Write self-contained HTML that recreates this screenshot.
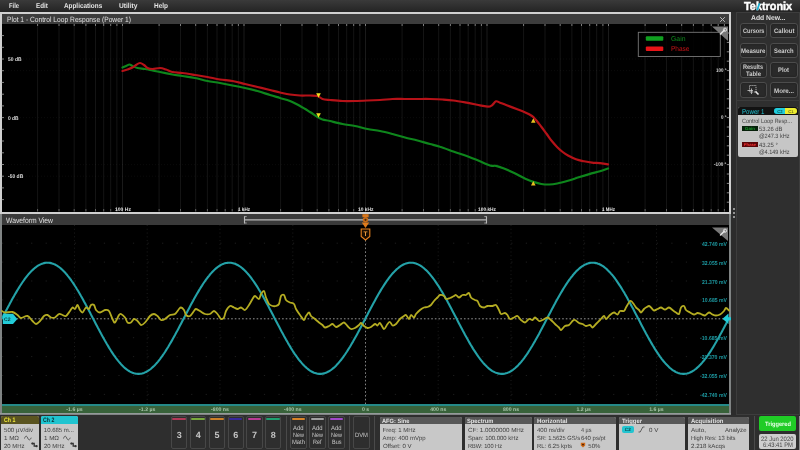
<!DOCTYPE html>
<html><head><meta charset="utf-8"><title>Oscilloscope</title>
<style>
html,body{margin:0;padding:0}
body{width:800px;height:450px;overflow:hidden;background:#2c2c2c;position:relative;font-family:"Liberation Sans",sans-serif}
#w{position:absolute;left:0;top:0;width:800px;height:450px;will-change:transform;overflow:hidden}
.r{position:absolute;display:block}
.t{position:absolute;white-space:nowrap;transform-origin:0 50%;display:block;text-rendering:geometricPrecision}
</style></head><body><div id="w">
<div class="r" style="left:0px;top:0px;width:800px;height:12px;background:linear-gradient(#3a3a3a,#242424);"></div>
<span class="t" style="left:8.70px;top:3px;font-size:7.1px;line-height:7.1px;color:#e4e4e4;font-weight:bold;transform:scaleX(0.8177);">File</span>
<span class="t" style="left:35.60px;top:3px;font-size:7.1px;line-height:7.1px;color:#e4e4e4;font-weight:bold;transform:scaleX(0.8800);">Edit</span>
<span class="t" style="left:64.40px;top:3px;font-size:7.1px;line-height:7.1px;color:#e4e4e4;font-weight:bold;transform:scaleX(0.8967);">Applications</span>
<span class="t" style="left:119.00px;top:3px;font-size:7.1px;line-height:7.1px;color:#e4e4e4;font-weight:bold;transform:scaleX(0.9381);">Utility</span>
<span class="t" style="left:154.00px;top:3px;font-size:7.1px;line-height:7.1px;color:#e4e4e4;font-weight:bold;transform:scaleX(0.9100);">Help</span>
<div class="r" style="left:0px;top:12px;width:731px;height:201.6px;background:#d0d0d0;"></div>
<div class="r" style="left:0px;top:213.6px;width:731px;height:201px;background:#808484;"></div>
<div class="r" style="left:1.5px;top:13.7px;width:727.8px;height:10px;background:#3c3c3c;"></div>
<div class="r" style="left:1.5px;top:23.7px;width:727.8px;height:188px;background:#000;"></div>
<div class="r" style="left:1.5px;top:214px;width:727.8px;height:10.8px;background:#3a3a3a;"></div>
<div class="r" style="left:1.5px;top:224.8px;width:727.8px;height:188px;background:#000;"></div>
<span class="t" style="left:6.50px;top:16px;font-size:7.6px;line-height:7.6px;color:#e0e0e0;transform:scaleX(0.8789);">Plot 1 - Control Loop Response (Power 1)</span>
<span class="t" style="left:6.40px;top:217px;font-size:7.8px;line-height:7.8px;color:#e0e0e0;transform:scaleX(0.8675);">Waveform View</span>
<svg class="r" style="left:717.5px;top:14.5px" width="9" height="9" viewBox="0 0 9 9"><path d="M2.2 2.2L6.8 6.8M6.8 2.2L2.2 6.8" stroke="#bdbdbd" stroke-width="1" fill="none"/></svg>
<div class="r" style="left:735.5px;top:12px;width:64.5px;height:402.5px;background:#2f2f2f;border:1px solid #3d3d3d;box-sizing:border-box;"></div>
<span class="t" style="left:744.30px;top:1px;font-size:11.6px;line-height:11.6px;color:#fff;font-weight:bold;transform:scaleX(0.9387);-webkit-text-stroke:0.45px #fff;">Tektronix</span>
<svg class="r" style="left:754px;top:1px" width="8" height="10" viewBox="0 0 8 10"><path d="M2.2 9.2L4.6 2.2L6.4 2.2L4.1 9.2Z" fill="#19b0d4"/></svg>
<span class="t" style="left:750.75px;top:15px;font-size:7px;line-height:7px;color:#e0e0e0;font-weight:bold;transform:scaleX(0.9713);">Add New...</span>
<div class="r" style="left:739.5px;top:23.3px;width:27.5px;height:15.2px;background:#2a2a2a;border:1px solid #4c4c4c;border-radius:3px;box-sizing:border-box;box-shadow:inset 0 0 2px #1c1c1c;"></div>
<span class="t" style="left:742.50px;top:29px;font-size:6.6px;line-height:6.6px;color:#cccccc;font-weight:bold;transform:scaleX(0.8496);">Cursors</span>
<div class="r" style="left:770px;top:23.3px;width:27.5px;height:15.2px;background:#2a2a2a;border:1px solid #4c4c4c;border-radius:3px;box-sizing:border-box;box-shadow:inset 0 0 2px #1c1c1c;"></div>
<span class="t" style="left:773.50px;top:29px;font-size:6.6px;line-height:6.6px;color:#cccccc;font-weight:bold;transform:scaleX(0.9167);">Callout</span>
<div class="r" style="left:739.5px;top:42.8px;width:27.5px;height:15.2px;background:#2a2a2a;border:1px solid #4c4c4c;border-radius:3px;box-sizing:border-box;box-shadow:inset 0 0 2px #1c1c1c;"></div>
<span class="t" style="left:741.00px;top:49px;font-size:6.6px;line-height:6.6px;color:#cccccc;font-weight:bold;transform:scaleX(0.9149);">Measure</span>
<div class="r" style="left:770px;top:42.8px;width:27.5px;height:15.2px;background:#2a2a2a;border:1px solid #4c4c4c;border-radius:3px;box-sizing:border-box;box-shadow:inset 0 0 2px #1c1c1c;"></div>
<span class="t" style="left:774.00px;top:49px;font-size:6.6px;line-height:6.6px;color:#cccccc;font-weight:bold;transform:scaleX(0.8858);">Search</span>
<div class="r" style="left:739.5px;top:62px;width:27.5px;height:15.5px;background:#2a2a2a;border:1px solid #4c4c4c;border-radius:3px;box-sizing:border-box;box-shadow:inset 0 0 2px #1c1c1c;"></div>
<span class="t" style="left:743.25px;top:65px;font-size:6.6px;line-height:6.6px;color:#cccccc;font-weight:bold;transform:scaleX(0.8389);">Results</span>
<span class="t" style="left:745.75px;top:72px;font-size:6.6px;line-height:6.6px;color:#cccccc;font-weight:bold;transform:scaleX(0.8957);">Table</span>
<div class="r" style="left:770px;top:62px;width:27.5px;height:15.5px;background:#2a2a2a;border:1px solid #4c4c4c;border-radius:3px;box-sizing:border-box;box-shadow:inset 0 0 2px #1c1c1c;"></div>
<span class="t" style="left:778.25px;top:68px;font-size:6.6px;line-height:6.6px;color:#cccccc;font-weight:bold;transform:scaleX(0.8825);">Plot</span>
<div class="r" style="left:739.5px;top:82.3px;width:27.5px;height:15.5px;background:#2a2a2a;border:1px solid #4c4c4c;border-radius:3px;box-sizing:border-box;box-shadow:inset 0 0 2px #1c1c1c;"></div>
<div class="r" style="left:770px;top:82.3px;width:27.5px;height:15.5px;background:#2a2a2a;border:1px solid #4c4c4c;border-radius:3px;box-sizing:border-box;box-shadow:inset 0 0 2px #1c1c1c;"></div>
<span class="t" style="left:773.75px;top:89px;font-size:6.6px;line-height:6.6px;color:#cccccc;font-weight:bold;transform:scaleX(0.9404);">More...</span>
<svg class="r" style="left:747px;top:84px" width="13" height="12" viewBox="0 0 13 12"><rect x="2.5" y="1.5" width="6.5" height="6.5" fill="none" stroke="#cfcfcf" stroke-width="0.8" stroke-dasharray="1.2 0.8"/><path d="M0.5 6.5H6M4.5 4.5V10" stroke="#cfcfcf" stroke-width="0.8" fill="none"/><path d="M8.5 7.5l3 3" stroke="#e8e8e8" stroke-width="1.6"/></svg>
<div class="r" style="left:737px;top:100px;width:63px;height:1px;background:#3c3c3c;"></div>
<div class="r" style="left:738.3px;top:107.3px;width:60px;height:49.4px;background:#c6c6c6;border-radius:2px;"></div>
<div class="r" style="left:738.3px;top:107.3px;width:60px;height:7.4px;background:#121212;border-radius:2px 2px 0 0;"></div>
<span class="t" style="left:741.50px;top:109px;font-size:7px;line-height:7px;color:#22c4d4;transform:scaleX(0.8762);">Power 1</span>
<div class="r" style="left:774.3px;top:108.3px;width:22.7px;height:5.4px;background:linear-gradient(90deg,#22ccdc 0,#22ccdc 50%,#ecec30 50%,#ecec30 100%);border-radius:2.7px;"></div>
<span class="t" style="left:777.32px;top:110px;font-size:4.2px;line-height:4.2px;color:#0a5a60;font-weight:bold;">C2</span>
<span class="t" style="left:788.32px;top:110px;font-size:4.2px;line-height:4.2px;color:#77771a;font-weight:bold;">C1</span>
<span class="t" style="left:741.70px;top:119px;font-size:6.2px;line-height:6.2px;color:#444;transform:scaleX(0.8793);">Control Loop Resp...</span>
<div class="r" style="left:742.3px;top:126px;width:15.4px;height:5.3px;background:#06200a;"></div>
<span class="t" style="left:745.11px;top:127px;font-size:4.4px;line-height:4.4px;color:#1c9a2c;font-weight:bold;">Gain</span>
<span class="t" style="left:758.50px;top:127px;font-size:6.2px;line-height:6.2px;color:#444;transform:scaleX(0.9468);">53.26 dB</span>
<span class="t" style="left:759.00px;top:134px;font-size:6.2px;line-height:6.2px;color:#444;transform:scaleX(0.8916);">@247.3 kHz</span>
<div class="r" style="left:742.3px;top:141.6px;width:15.4px;height:5.3px;background:#5a0508;"></div>
<span class="t" style="left:743.81px;top:143px;font-size:4.2px;line-height:4.2px;color:#f03030;font-weight:bold;">Phase</span>
<span class="t" style="left:758.50px;top:143px;font-size:6.2px;line-height:6.2px;color:#444;transform:scaleX(0.9637);">43.25 °</span>
<span class="t" style="left:759.00px;top:150px;font-size:6.2px;line-height:6.2px;color:#444;transform:scaleX(0.8916);">@4.149 kHz</span>
<div class="r" style="left:733.2px;top:208px;width:1.6px;height:1.6px;background:#b4b4b4;border-radius:1px;"></div>
<div class="r" style="left:733.2px;top:212px;width:1.6px;height:1.6px;background:#b4b4b4;border-radius:1px;"></div>
<div class="r" style="left:733.2px;top:216px;width:1.6px;height:1.6px;background:#b4b4b4;border-radius:1px;"></div>
<svg class="r" style="left:0;top:0" width="800" height="450" viewBox="0 0 800 450">
<line x1="37.6" y1="24" x2="37.6" y2="211" stroke="#fff" stroke-opacity="0.08" stroke-width="1"/>
<line x1="37.6" y1="24" x2="37.6" y2="26" stroke="#999" stroke-width="0.8"/>
<line x1="37.6" y1="209" x2="37.6" y2="211.5" stroke="#777" stroke-width="0.8"/>
<line x1="59.0" y1="24" x2="59.0" y2="211" stroke="#fff" stroke-opacity="0.08" stroke-width="1"/>
<line x1="59.0" y1="24" x2="59.0" y2="26" stroke="#999" stroke-width="0.8"/>
<line x1="59.0" y1="209" x2="59.0" y2="211.5" stroke="#777" stroke-width="0.8"/>
<line x1="74.2" y1="24" x2="74.2" y2="211" stroke="#fff" stroke-opacity="0.08" stroke-width="1"/>
<line x1="74.2" y1="24" x2="74.2" y2="26" stroke="#999" stroke-width="0.8"/>
<line x1="74.2" y1="209" x2="74.2" y2="211.5" stroke="#777" stroke-width="0.8"/>
<line x1="85.9" y1="24" x2="85.9" y2="211" stroke="#fff" stroke-opacity="0.08" stroke-width="1"/>
<line x1="85.9" y1="24" x2="85.9" y2="26" stroke="#999" stroke-width="0.8"/>
<line x1="85.9" y1="209" x2="85.9" y2="211.5" stroke="#777" stroke-width="0.8"/>
<line x1="95.5" y1="24" x2="95.5" y2="211" stroke="#fff" stroke-opacity="0.08" stroke-width="1"/>
<line x1="95.5" y1="24" x2="95.5" y2="26" stroke="#999" stroke-width="0.8"/>
<line x1="95.5" y1="209" x2="95.5" y2="211.5" stroke="#777" stroke-width="0.8"/>
<line x1="103.7" y1="24" x2="103.7" y2="211" stroke="#fff" stroke-opacity="0.08" stroke-width="1"/>
<line x1="103.7" y1="24" x2="103.7" y2="26" stroke="#999" stroke-width="0.8"/>
<line x1="103.7" y1="209" x2="103.7" y2="211.5" stroke="#777" stroke-width="0.8"/>
<line x1="110.7" y1="24" x2="110.7" y2="211" stroke="#fff" stroke-opacity="0.08" stroke-width="1"/>
<line x1="110.7" y1="24" x2="110.7" y2="26" stroke="#999" stroke-width="0.8"/>
<line x1="110.7" y1="209" x2="110.7" y2="211.5" stroke="#777" stroke-width="0.8"/>
<line x1="116.9" y1="24" x2="116.9" y2="211" stroke="#fff" stroke-opacity="0.08" stroke-width="1"/>
<line x1="116.9" y1="24" x2="116.9" y2="26" stroke="#999" stroke-width="0.8"/>
<line x1="116.9" y1="209" x2="116.9" y2="211.5" stroke="#777" stroke-width="0.8"/>
<line x1="122.5" y1="24" x2="122.5" y2="211" stroke="#fff" stroke-opacity="0.1" stroke-width="1"/>
<line x1="122.5" y1="24" x2="122.5" y2="26" stroke="#999" stroke-width="0.8"/>
<line x1="122.5" y1="209" x2="122.5" y2="211.5" stroke="#777" stroke-width="0.8"/>
<line x1="159.1" y1="24" x2="159.1" y2="211" stroke="#fff" stroke-opacity="0.08" stroke-width="1"/>
<line x1="159.1" y1="24" x2="159.1" y2="26" stroke="#999" stroke-width="0.8"/>
<line x1="159.1" y1="209" x2="159.1" y2="211.5" stroke="#777" stroke-width="0.8"/>
<line x1="180.5" y1="24" x2="180.5" y2="211" stroke="#fff" stroke-opacity="0.08" stroke-width="1"/>
<line x1="180.5" y1="24" x2="180.5" y2="26" stroke="#999" stroke-width="0.8"/>
<line x1="180.5" y1="209" x2="180.5" y2="211.5" stroke="#777" stroke-width="0.8"/>
<line x1="195.7" y1="24" x2="195.7" y2="211" stroke="#fff" stroke-opacity="0.08" stroke-width="1"/>
<line x1="195.7" y1="24" x2="195.7" y2="26" stroke="#999" stroke-width="0.8"/>
<line x1="195.7" y1="209" x2="195.7" y2="211.5" stroke="#777" stroke-width="0.8"/>
<line x1="207.4" y1="24" x2="207.4" y2="211" stroke="#fff" stroke-opacity="0.08" stroke-width="1"/>
<line x1="207.4" y1="24" x2="207.4" y2="26" stroke="#999" stroke-width="0.8"/>
<line x1="207.4" y1="209" x2="207.4" y2="211.5" stroke="#777" stroke-width="0.8"/>
<line x1="217.0" y1="24" x2="217.0" y2="211" stroke="#fff" stroke-opacity="0.08" stroke-width="1"/>
<line x1="217.0" y1="24" x2="217.0" y2="26" stroke="#999" stroke-width="0.8"/>
<line x1="217.0" y1="209" x2="217.0" y2="211.5" stroke="#777" stroke-width="0.8"/>
<line x1="225.2" y1="24" x2="225.2" y2="211" stroke="#fff" stroke-opacity="0.08" stroke-width="1"/>
<line x1="225.2" y1="24" x2="225.2" y2="26" stroke="#999" stroke-width="0.8"/>
<line x1="225.2" y1="209" x2="225.2" y2="211.5" stroke="#777" stroke-width="0.8"/>
<line x1="232.2" y1="24" x2="232.2" y2="211" stroke="#fff" stroke-opacity="0.08" stroke-width="1"/>
<line x1="232.2" y1="24" x2="232.2" y2="26" stroke="#999" stroke-width="0.8"/>
<line x1="232.2" y1="209" x2="232.2" y2="211.5" stroke="#777" stroke-width="0.8"/>
<line x1="238.4" y1="24" x2="238.4" y2="211" stroke="#fff" stroke-opacity="0.08" stroke-width="1"/>
<line x1="238.4" y1="24" x2="238.4" y2="26" stroke="#999" stroke-width="0.8"/>
<line x1="238.4" y1="209" x2="238.4" y2="211.5" stroke="#777" stroke-width="0.8"/>
<line x1="244.0" y1="24" x2="244.0" y2="211" stroke="#fff" stroke-opacity="0.1" stroke-width="1"/>
<line x1="244.0" y1="24" x2="244.0" y2="26" stroke="#999" stroke-width="0.8"/>
<line x1="244.0" y1="209" x2="244.0" y2="211.5" stroke="#777" stroke-width="0.8"/>
<line x1="280.6" y1="24" x2="280.6" y2="211" stroke="#fff" stroke-opacity="0.08" stroke-width="1"/>
<line x1="280.6" y1="24" x2="280.6" y2="26" stroke="#999" stroke-width="0.8"/>
<line x1="280.6" y1="209" x2="280.6" y2="211.5" stroke="#777" stroke-width="0.8"/>
<line x1="302.0" y1="24" x2="302.0" y2="211" stroke="#fff" stroke-opacity="0.08" stroke-width="1"/>
<line x1="302.0" y1="24" x2="302.0" y2="26" stroke="#999" stroke-width="0.8"/>
<line x1="302.0" y1="209" x2="302.0" y2="211.5" stroke="#777" stroke-width="0.8"/>
<line x1="317.2" y1="24" x2="317.2" y2="211" stroke="#fff" stroke-opacity="0.08" stroke-width="1"/>
<line x1="317.2" y1="24" x2="317.2" y2="26" stroke="#999" stroke-width="0.8"/>
<line x1="317.2" y1="209" x2="317.2" y2="211.5" stroke="#777" stroke-width="0.8"/>
<line x1="328.9" y1="24" x2="328.9" y2="211" stroke="#fff" stroke-opacity="0.08" stroke-width="1"/>
<line x1="328.9" y1="24" x2="328.9" y2="26" stroke="#999" stroke-width="0.8"/>
<line x1="328.9" y1="209" x2="328.9" y2="211.5" stroke="#777" stroke-width="0.8"/>
<line x1="338.5" y1="24" x2="338.5" y2="211" stroke="#fff" stroke-opacity="0.08" stroke-width="1"/>
<line x1="338.5" y1="24" x2="338.5" y2="26" stroke="#999" stroke-width="0.8"/>
<line x1="338.5" y1="209" x2="338.5" y2="211.5" stroke="#777" stroke-width="0.8"/>
<line x1="346.7" y1="24" x2="346.7" y2="211" stroke="#fff" stroke-opacity="0.08" stroke-width="1"/>
<line x1="346.7" y1="24" x2="346.7" y2="26" stroke="#999" stroke-width="0.8"/>
<line x1="346.7" y1="209" x2="346.7" y2="211.5" stroke="#777" stroke-width="0.8"/>
<line x1="353.7" y1="24" x2="353.7" y2="211" stroke="#fff" stroke-opacity="0.08" stroke-width="1"/>
<line x1="353.7" y1="24" x2="353.7" y2="26" stroke="#999" stroke-width="0.8"/>
<line x1="353.7" y1="209" x2="353.7" y2="211.5" stroke="#777" stroke-width="0.8"/>
<line x1="359.9" y1="24" x2="359.9" y2="211" stroke="#fff" stroke-opacity="0.08" stroke-width="1"/>
<line x1="359.9" y1="24" x2="359.9" y2="26" stroke="#999" stroke-width="0.8"/>
<line x1="359.9" y1="209" x2="359.9" y2="211.5" stroke="#777" stroke-width="0.8"/>
<line x1="365.5" y1="24" x2="365.5" y2="211" stroke="#fff" stroke-opacity="0.1" stroke-width="1"/>
<line x1="365.5" y1="24" x2="365.5" y2="26" stroke="#999" stroke-width="0.8"/>
<line x1="365.5" y1="209" x2="365.5" y2="211.5" stroke="#777" stroke-width="0.8"/>
<line x1="402.1" y1="24" x2="402.1" y2="211" stroke="#fff" stroke-opacity="0.08" stroke-width="1"/>
<line x1="402.1" y1="24" x2="402.1" y2="26" stroke="#999" stroke-width="0.8"/>
<line x1="402.1" y1="209" x2="402.1" y2="211.5" stroke="#777" stroke-width="0.8"/>
<line x1="423.5" y1="24" x2="423.5" y2="211" stroke="#fff" stroke-opacity="0.08" stroke-width="1"/>
<line x1="423.5" y1="24" x2="423.5" y2="26" stroke="#999" stroke-width="0.8"/>
<line x1="423.5" y1="209" x2="423.5" y2="211.5" stroke="#777" stroke-width="0.8"/>
<line x1="438.7" y1="24" x2="438.7" y2="211" stroke="#fff" stroke-opacity="0.08" stroke-width="1"/>
<line x1="438.7" y1="24" x2="438.7" y2="26" stroke="#999" stroke-width="0.8"/>
<line x1="438.7" y1="209" x2="438.7" y2="211.5" stroke="#777" stroke-width="0.8"/>
<line x1="450.4" y1="24" x2="450.4" y2="211" stroke="#fff" stroke-opacity="0.08" stroke-width="1"/>
<line x1="450.4" y1="24" x2="450.4" y2="26" stroke="#999" stroke-width="0.8"/>
<line x1="450.4" y1="209" x2="450.4" y2="211.5" stroke="#777" stroke-width="0.8"/>
<line x1="460.0" y1="24" x2="460.0" y2="211" stroke="#fff" stroke-opacity="0.08" stroke-width="1"/>
<line x1="460.0" y1="24" x2="460.0" y2="26" stroke="#999" stroke-width="0.8"/>
<line x1="460.0" y1="209" x2="460.0" y2="211.5" stroke="#777" stroke-width="0.8"/>
<line x1="468.2" y1="24" x2="468.2" y2="211" stroke="#fff" stroke-opacity="0.08" stroke-width="1"/>
<line x1="468.2" y1="24" x2="468.2" y2="26" stroke="#999" stroke-width="0.8"/>
<line x1="468.2" y1="209" x2="468.2" y2="211.5" stroke="#777" stroke-width="0.8"/>
<line x1="475.2" y1="24" x2="475.2" y2="211" stroke="#fff" stroke-opacity="0.08" stroke-width="1"/>
<line x1="475.2" y1="24" x2="475.2" y2="26" stroke="#999" stroke-width="0.8"/>
<line x1="475.2" y1="209" x2="475.2" y2="211.5" stroke="#777" stroke-width="0.8"/>
<line x1="481.4" y1="24" x2="481.4" y2="211" stroke="#fff" stroke-opacity="0.08" stroke-width="1"/>
<line x1="481.4" y1="24" x2="481.4" y2="26" stroke="#999" stroke-width="0.8"/>
<line x1="481.4" y1="209" x2="481.4" y2="211.5" stroke="#777" stroke-width="0.8"/>
<line x1="487.0" y1="24" x2="487.0" y2="211" stroke="#fff" stroke-opacity="0.1" stroke-width="1"/>
<line x1="487.0" y1="24" x2="487.0" y2="26" stroke="#999" stroke-width="0.8"/>
<line x1="487.0" y1="209" x2="487.0" y2="211.5" stroke="#777" stroke-width="0.8"/>
<line x1="523.6" y1="24" x2="523.6" y2="211" stroke="#fff" stroke-opacity="0.08" stroke-width="1"/>
<line x1="523.6" y1="24" x2="523.6" y2="26" stroke="#999" stroke-width="0.8"/>
<line x1="523.6" y1="209" x2="523.6" y2="211.5" stroke="#777" stroke-width="0.8"/>
<line x1="545.0" y1="24" x2="545.0" y2="211" stroke="#fff" stroke-opacity="0.08" stroke-width="1"/>
<line x1="545.0" y1="24" x2="545.0" y2="26" stroke="#999" stroke-width="0.8"/>
<line x1="545.0" y1="209" x2="545.0" y2="211.5" stroke="#777" stroke-width="0.8"/>
<line x1="560.2" y1="24" x2="560.2" y2="211" stroke="#fff" stroke-opacity="0.08" stroke-width="1"/>
<line x1="560.2" y1="24" x2="560.2" y2="26" stroke="#999" stroke-width="0.8"/>
<line x1="560.2" y1="209" x2="560.2" y2="211.5" stroke="#777" stroke-width="0.8"/>
<line x1="571.9" y1="24" x2="571.9" y2="211" stroke="#fff" stroke-opacity="0.08" stroke-width="1"/>
<line x1="571.9" y1="24" x2="571.9" y2="26" stroke="#999" stroke-width="0.8"/>
<line x1="571.9" y1="209" x2="571.9" y2="211.5" stroke="#777" stroke-width="0.8"/>
<line x1="581.5" y1="24" x2="581.5" y2="211" stroke="#fff" stroke-opacity="0.08" stroke-width="1"/>
<line x1="581.5" y1="24" x2="581.5" y2="26" stroke="#999" stroke-width="0.8"/>
<line x1="581.5" y1="209" x2="581.5" y2="211.5" stroke="#777" stroke-width="0.8"/>
<line x1="589.7" y1="24" x2="589.7" y2="211" stroke="#fff" stroke-opacity="0.08" stroke-width="1"/>
<line x1="589.7" y1="24" x2="589.7" y2="26" stroke="#999" stroke-width="0.8"/>
<line x1="589.7" y1="209" x2="589.7" y2="211.5" stroke="#777" stroke-width="0.8"/>
<line x1="596.7" y1="24" x2="596.7" y2="211" stroke="#fff" stroke-opacity="0.08" stroke-width="1"/>
<line x1="596.7" y1="24" x2="596.7" y2="26" stroke="#999" stroke-width="0.8"/>
<line x1="596.7" y1="209" x2="596.7" y2="211.5" stroke="#777" stroke-width="0.8"/>
<line x1="602.9" y1="24" x2="602.9" y2="211" stroke="#fff" stroke-opacity="0.08" stroke-width="1"/>
<line x1="602.9" y1="24" x2="602.9" y2="26" stroke="#999" stroke-width="0.8"/>
<line x1="602.9" y1="209" x2="602.9" y2="211.5" stroke="#777" stroke-width="0.8"/>
<line x1="608.5" y1="24" x2="608.5" y2="211" stroke="#fff" stroke-opacity="0.1" stroke-width="1"/>
<line x1="608.5" y1="24" x2="608.5" y2="26" stroke="#999" stroke-width="0.8"/>
<line x1="608.5" y1="209" x2="608.5" y2="211.5" stroke="#777" stroke-width="0.8"/>
<line x1="645.1" y1="24" x2="645.1" y2="211" stroke="#fff" stroke-opacity="0.08" stroke-width="1"/>
<line x1="645.1" y1="24" x2="645.1" y2="26" stroke="#999" stroke-width="0.8"/>
<line x1="645.1" y1="209" x2="645.1" y2="211.5" stroke="#777" stroke-width="0.8"/>
<line x1="666.5" y1="24" x2="666.5" y2="211" stroke="#fff" stroke-opacity="0.08" stroke-width="1"/>
<line x1="666.5" y1="24" x2="666.5" y2="26" stroke="#999" stroke-width="0.8"/>
<line x1="666.5" y1="209" x2="666.5" y2="211.5" stroke="#777" stroke-width="0.8"/>
<line x1="681.7" y1="24" x2="681.7" y2="211" stroke="#fff" stroke-opacity="0.08" stroke-width="1"/>
<line x1="681.7" y1="24" x2="681.7" y2="26" stroke="#999" stroke-width="0.8"/>
<line x1="681.7" y1="209" x2="681.7" y2="211.5" stroke="#777" stroke-width="0.8"/>
<line x1="693.4" y1="24" x2="693.4" y2="211" stroke="#fff" stroke-opacity="0.08" stroke-width="1"/>
<line x1="693.4" y1="24" x2="693.4" y2="26" stroke="#999" stroke-width="0.8"/>
<line x1="693.4" y1="209" x2="693.4" y2="211.5" stroke="#777" stroke-width="0.8"/>
<line x1="703.0" y1="24" x2="703.0" y2="211" stroke="#fff" stroke-opacity="0.08" stroke-width="1"/>
<line x1="703.0" y1="24" x2="703.0" y2="26" stroke="#999" stroke-width="0.8"/>
<line x1="703.0" y1="209" x2="703.0" y2="211.5" stroke="#777" stroke-width="0.8"/>
<line x1="711.2" y1="24" x2="711.2" y2="211" stroke="#fff" stroke-opacity="0.08" stroke-width="1"/>
<line x1="711.2" y1="24" x2="711.2" y2="26" stroke="#999" stroke-width="0.8"/>
<line x1="711.2" y1="209" x2="711.2" y2="211.5" stroke="#777" stroke-width="0.8"/>
<line x1="718.2" y1="24" x2="718.2" y2="211" stroke="#fff" stroke-opacity="0.08" stroke-width="1"/>
<line x1="718.2" y1="24" x2="718.2" y2="26" stroke="#999" stroke-width="0.8"/>
<line x1="718.2" y1="209" x2="718.2" y2="211.5" stroke="#777" stroke-width="0.8"/>
<line x1="724.4" y1="24" x2="724.4" y2="211" stroke="#fff" stroke-opacity="0.08" stroke-width="1"/>
<line x1="724.4" y1="24" x2="724.4" y2="26" stroke="#999" stroke-width="0.8"/>
<line x1="724.4" y1="209" x2="724.4" y2="211.5" stroke="#777" stroke-width="0.8"/>
<line x1="2" y1="59" x2="729" y2="59" stroke="#fff" stroke-opacity="0.06" stroke-width="0.8" stroke-dasharray="1 2"/>
<line x1="2" y1="70.6" x2="729" y2="70.6" stroke="#fff" stroke-opacity="0.06" stroke-width="0.8" stroke-dasharray="1 2"/>
<line x1="2" y1="117.6" x2="729" y2="117.6" stroke="#fff" stroke-opacity="0.06" stroke-width="0.8" stroke-dasharray="1 2"/>
<line x1="2" y1="164.6" x2="729" y2="164.6" stroke="#fff" stroke-opacity="0.06" stroke-width="0.8" stroke-dasharray="1 2"/>
<line x1="2" y1="176.2" x2="729" y2="176.2" stroke="#fff" stroke-opacity="0.06" stroke-width="0.8" stroke-dasharray="1 2"/>
<line x1="1.5" y1="199.6" x2="4" y2="199.6" stroke="#aaa" stroke-width="0.8"/>
<line x1="1.5" y1="187.9" x2="4" y2="187.9" stroke="#aaa" stroke-width="0.8"/>
<line x1="1.5" y1="176.2" x2="4" y2="176.2" stroke="#aaa" stroke-width="0.8"/>
<line x1="1.5" y1="164.5" x2="4" y2="164.5" stroke="#aaa" stroke-width="0.8"/>
<line x1="1.5" y1="152.8" x2="4" y2="152.8" stroke="#aaa" stroke-width="0.8"/>
<line x1="1.5" y1="141.0" x2="4" y2="141.0" stroke="#aaa" stroke-width="0.8"/>
<line x1="1.5" y1="129.3" x2="4" y2="129.3" stroke="#aaa" stroke-width="0.8"/>
<line x1="1.5" y1="117.6" x2="4" y2="117.6" stroke="#aaa" stroke-width="0.8"/>
<line x1="1.5" y1="105.9" x2="4" y2="105.9" stroke="#aaa" stroke-width="0.8"/>
<line x1="1.5" y1="94.2" x2="4" y2="94.2" stroke="#aaa" stroke-width="0.8"/>
<line x1="1.5" y1="82.4" x2="4" y2="82.4" stroke="#aaa" stroke-width="0.8"/>
<line x1="1.5" y1="70.7" x2="4" y2="70.7" stroke="#aaa" stroke-width="0.8"/>
<line x1="1.5" y1="59.0" x2="4" y2="59.0" stroke="#aaa" stroke-width="0.8"/>
<line x1="1.5" y1="47.3" x2="4" y2="47.3" stroke="#aaa" stroke-width="0.8"/>
<line x1="1.5" y1="35.6" x2="4" y2="35.6" stroke="#aaa" stroke-width="0.8"/>
<line x1="726.8" y1="202.2" x2="729.3" y2="202.2" stroke="#aaa" stroke-width="0.8"/>
<line x1="726.8" y1="192.8" x2="729.3" y2="192.8" stroke="#aaa" stroke-width="0.8"/>
<line x1="726.8" y1="183.4" x2="729.3" y2="183.4" stroke="#aaa" stroke-width="0.8"/>
<line x1="726.8" y1="174.0" x2="729.3" y2="174.0" stroke="#aaa" stroke-width="0.8"/>
<line x1="726.8" y1="164.6" x2="729.3" y2="164.6" stroke="#aaa" stroke-width="0.8"/>
<line x1="726.8" y1="155.2" x2="729.3" y2="155.2" stroke="#aaa" stroke-width="0.8"/>
<line x1="726.8" y1="145.8" x2="729.3" y2="145.8" stroke="#aaa" stroke-width="0.8"/>
<line x1="726.8" y1="136.4" x2="729.3" y2="136.4" stroke="#aaa" stroke-width="0.8"/>
<line x1="726.8" y1="127.0" x2="729.3" y2="127.0" stroke="#aaa" stroke-width="0.8"/>
<line x1="726.8" y1="117.6" x2="729.3" y2="117.6" stroke="#aaa" stroke-width="0.8"/>
<line x1="726.8" y1="108.2" x2="729.3" y2="108.2" stroke="#aaa" stroke-width="0.8"/>
<line x1="726.8" y1="98.8" x2="729.3" y2="98.8" stroke="#aaa" stroke-width="0.8"/>
<line x1="726.8" y1="89.4" x2="729.3" y2="89.4" stroke="#aaa" stroke-width="0.8"/>
<line x1="726.8" y1="80.0" x2="729.3" y2="80.0" stroke="#aaa" stroke-width="0.8"/>
<line x1="726.8" y1="70.6" x2="729.3" y2="70.6" stroke="#aaa" stroke-width="0.8"/>
<line x1="726.8" y1="61.2" x2="729.3" y2="61.2" stroke="#aaa" stroke-width="0.8"/>
<line x1="726.8" y1="51.8" x2="729.3" y2="51.8" stroke="#aaa" stroke-width="0.8"/>
<line x1="726.8" y1="42.4" x2="729.3" y2="42.4" stroke="#aaa" stroke-width="0.8"/>
<line x1="726.8" y1="33.0" x2="729.3" y2="33.0" stroke="#aaa" stroke-width="0.8"/>
<path d="M122.5 67.5C123.1 67.2 124.8 66.5 126.0 66.0C127.2 65.5 128.4 64.5 129.5 64.5C130.6 64.5 131.2 65.4 132.5 66.0C133.8 66.6 135.4 67.5 137.5 68.0C139.6 68.5 142.5 68.6 145.0 69.0C147.5 69.4 150.0 70.0 152.5 70.5C155.0 71.0 156.7 71.3 160.0 72.0C163.3 72.7 168.8 73.8 172.5 74.5C176.2 75.2 178.8 75.4 182.5 76.0C186.2 76.6 190.8 77.2 195.0 78.0C199.2 78.8 203.3 80.2 207.5 81.0C211.7 81.8 215.8 82.2 220.0 83.0C224.2 83.8 228.3 84.7 232.5 85.5C236.7 86.3 240.8 87.1 245.0 88.0C249.2 88.9 253.3 89.8 257.5 91.0C261.7 92.2 266.2 93.8 270.0 95.0C273.8 96.2 276.7 97.0 280.0 98.0C283.3 99.0 286.7 99.7 290.0 101.0C293.3 102.3 296.7 104.2 300.0 106.0C303.3 107.8 307.1 110.2 310.0 112.0C312.9 113.8 315.4 115.8 317.5 117.0C319.6 118.2 320.4 118.8 322.5 119.5C324.6 120.2 326.7 120.2 330.0 121.0C333.3 121.8 338.3 123.2 342.5 124.0C346.7 124.8 350.8 125.2 355.0 126.0C359.2 126.8 363.3 128.2 367.5 129.0C371.7 129.8 375.8 130.2 380.0 131.0C384.2 131.8 388.3 132.9 392.5 134.0C396.7 135.1 400.8 136.4 405.0 137.5C409.2 138.6 413.3 139.4 417.5 140.5C421.7 141.6 426.2 143.0 430.0 144.0C433.8 145.0 436.1 145.4 440.0 146.7C443.9 147.9 448.9 149.9 453.3 151.5C457.8 153.1 462.2 154.4 466.7 156.0C471.1 157.6 476.4 159.8 480.0 161.3C483.6 162.8 486.0 164.0 488.0 164.8C490.0 165.6 490.7 165.7 492.0 165.9C493.3 166.1 494.0 165.5 496.0 165.9C498.0 166.3 500.9 167.3 504.0 168.5C507.1 169.7 511.2 171.6 514.7 173.3C518.2 175.0 522.2 177.3 525.3 178.7C528.4 180.1 530.6 181.0 533.3 181.9C536.0 182.8 538.6 183.6 541.3 184.0C544.0 184.4 546.6 184.6 549.3 184.5C552.0 184.4 554.2 184.1 557.3 183.5C560.4 182.9 564.4 181.8 568.0 180.8C571.6 179.8 575.2 178.4 578.7 177.3C582.2 176.2 585.8 175.1 589.3 174.1C592.8 173.1 596.9 172.1 600.0 171.2C603.1 170.3 606.7 168.9 608.0 168.5" fill="none" stroke="#0e861c" stroke-width="2.2" stroke-linejoin="round" stroke-linecap="round"/>
<path d="M122.5 71.0C123.3 70.8 125.8 70.1 127.5 69.5C129.2 68.9 131.1 68.2 132.5 67.5C133.9 66.8 134.8 65.8 136.0 65.0C137.2 64.2 138.7 63.0 140.0 63.0C141.3 63.0 142.8 64.2 144.0 65.0C145.2 65.8 146.1 67.3 147.5 68.0C148.9 68.7 150.4 69.0 152.5 69.0C154.6 69.0 157.8 67.9 160.0 68.0C162.2 68.1 163.9 68.8 166.0 69.5C168.1 70.2 169.8 71.4 172.5 72.0C175.2 72.6 178.8 72.5 182.5 73.0C186.2 73.5 190.8 74.3 195.0 75.0C199.2 75.7 203.3 76.2 207.5 77.0C211.7 77.8 215.8 78.8 220.0 79.5C224.2 80.2 228.3 80.2 232.5 81.0C236.7 81.8 240.8 83.0 245.0 84.0C249.2 85.0 253.3 86.0 257.5 87.0C261.7 88.0 266.2 89.1 270.0 90.0C273.8 90.9 276.7 91.8 280.0 92.5C283.3 93.2 286.7 94.0 290.0 94.5C293.3 95.0 296.7 95.3 300.0 95.5C303.3 95.7 307.1 95.4 310.0 95.5C312.9 95.6 315.4 95.4 317.5 96.0C319.6 96.6 320.4 98.3 322.5 99.0C324.6 99.7 326.7 99.7 330.0 100.0C333.3 100.3 338.3 100.8 342.5 101.0C346.7 101.2 350.8 101.1 355.0 101.0C359.2 100.9 363.3 100.7 367.5 100.5C371.7 100.3 375.8 100.2 380.0 100.0C384.2 99.8 388.3 99.2 392.5 99.0C396.7 98.8 400.8 99.0 405.0 99.0C409.2 99.0 413.3 99.0 417.5 99.0C421.7 99.0 425.8 98.9 430.0 99.0C434.2 99.1 438.6 99.2 442.5 99.5C446.4 99.8 449.3 100.0 453.3 100.5C457.3 101.0 462.2 101.9 466.7 102.7C471.1 103.5 476.4 104.6 480.0 105.3C483.6 106.0 486.0 106.7 488.0 106.7C490.0 106.7 490.7 106.2 492.0 105.3C493.3 104.4 494.7 101.7 496.0 101.3C497.3 100.9 498.2 102.0 500.0 102.7C501.8 103.4 503.8 104.2 506.7 105.3C509.6 106.4 514.2 108.1 517.3 109.3C520.4 110.5 522.8 111.4 525.3 112.5C527.8 113.6 530.2 114.8 532.0 116.0C533.8 117.2 534.5 118.2 536.0 120.0C537.5 121.8 539.5 124.4 541.3 126.7C543.1 129.0 544.9 131.6 546.7 134.0C548.5 136.4 550.2 139.1 552.0 141.3C553.8 143.5 555.5 145.4 557.3 147.2C559.1 149.0 560.9 150.6 562.7 152.0C564.5 153.4 565.8 154.3 568.0 155.5C570.2 156.7 573.3 158.2 576.0 159.2C578.7 160.2 581.3 160.7 584.0 161.3C586.7 161.9 589.3 162.4 592.0 162.7C594.7 163.0 597.3 162.9 600.0 163.2C602.7 163.5 606.7 164.1 608.0 164.3" fill="none" stroke="#b61218" stroke-width="2.2" stroke-linejoin="round" stroke-linecap="round"/>
<path d="M316.2 93.3L320.8 93.3L318.5 97.7Z" fill="#f0e020"/>
<path d="M316.2 113.3L320.8 113.3L318.5 117.7Z" fill="#f0e020"/>
<path d="M531.0 122.7L535.5999999999999 122.7L533.3 118.3Z" fill="#e8c020"/>
<path d="M531.0 185.5L535.5999999999999 185.5L533.3 181.10000000000002Z" fill="#e8c020"/>
<rect x="638.3" y="32.3" width="82" height="24.2" fill="#000" fill-opacity="0.85" stroke="#777" stroke-width="0.9"/>
<rect x="645.8" y="36.3" width="17.5" height="4.4" rx="1" fill="#10a020"/>
<rect x="645.8" y="46.6" width="17.5" height="4.4" rx="1" fill="#e81418"/>
<path d="M712 26.5L728 26.5L728 41Z" fill="#787878"/>
<path d="M720.5 34l4-4" stroke="#e8e8e8" stroke-width="1.5" stroke-linecap="round"/><circle cx="725" cy="29.7" r="1.6" fill="none" stroke="#e8e8e8" stroke-width="0.9"/>
<path d="M712 227.5L728 227.5L728 241Z" fill="#787878"/>
<path d="M720.5 235l4-4" stroke="#e8e8e8" stroke-width="1.5" stroke-linecap="round"/><circle cx="725" cy="230.7" r="1.6" fill="none" stroke="#e8e8e8" stroke-width="0.9"/>
<line x1="74.5" y1="225" x2="74.5" y2="404" stroke="#fff" stroke-opacity="0.12" stroke-width="0.9" stroke-dasharray="1 2.78"/>
<line x1="147.2" y1="225" x2="147.2" y2="404" stroke="#fff" stroke-opacity="0.12" stroke-width="0.9" stroke-dasharray="1 2.78"/>
<line x1="220.0" y1="225" x2="220.0" y2="404" stroke="#fff" stroke-opacity="0.12" stroke-width="0.9" stroke-dasharray="1 2.78"/>
<line x1="292.8" y1="225" x2="292.8" y2="404" stroke="#fff" stroke-opacity="0.12" stroke-width="0.9" stroke-dasharray="1 2.78"/>
<line x1="365.5" y1="240" x2="365.5" y2="404" stroke="#ddd" stroke-opacity="0.75" stroke-width="0.8" stroke-dasharray="1.6 2.18"/>
<line x1="438.2" y1="225" x2="438.2" y2="404" stroke="#fff" stroke-opacity="0.12" stroke-width="0.9" stroke-dasharray="1 2.78"/>
<line x1="511.0" y1="225" x2="511.0" y2="404" stroke="#fff" stroke-opacity="0.12" stroke-width="0.9" stroke-dasharray="1 2.78"/>
<line x1="583.8" y1="225" x2="583.8" y2="404" stroke="#fff" stroke-opacity="0.12" stroke-width="0.9" stroke-dasharray="1 2.78"/>
<line x1="656.5" y1="225" x2="656.5" y2="404" stroke="#fff" stroke-opacity="0.12" stroke-width="0.9" stroke-dasharray="1 2.78"/>
<line x1="2" y1="243.2" x2="729" y2="243.2" stroke="#fff" stroke-opacity="0.13" stroke-width="0.9" stroke-dasharray="1.2 13.35"/>
<line x1="2" y1="262.1" x2="729" y2="262.1" stroke="#fff" stroke-opacity="0.13" stroke-width="0.9" stroke-dasharray="1.2 13.35"/>
<line x1="2" y1="281.0" x2="729" y2="281.0" stroke="#fff" stroke-opacity="0.13" stroke-width="0.9" stroke-dasharray="1.2 13.35"/>
<line x1="2" y1="299.9" x2="729" y2="299.9" stroke="#fff" stroke-opacity="0.13" stroke-width="0.9" stroke-dasharray="1.2 13.35"/>
<line x1="2" y1="318.8" x2="729" y2="318.8" stroke="#ddd" stroke-opacity="0.75" stroke-width="0.9" stroke-dasharray="1.6 2.0375"/>
<line x1="2" y1="337.7" x2="729" y2="337.7" stroke="#fff" stroke-opacity="0.13" stroke-width="0.9" stroke-dasharray="1.2 13.35"/>
<line x1="2" y1="356.6" x2="729" y2="356.6" stroke="#fff" stroke-opacity="0.13" stroke-width="0.9" stroke-dasharray="1.2 13.35"/>
<line x1="2" y1="375.5" x2="729" y2="375.5" stroke="#fff" stroke-opacity="0.13" stroke-width="0.9" stroke-dasharray="1.2 13.35"/>
<line x1="2" y1="394.4" x2="729" y2="394.4" stroke="#fff" stroke-opacity="0.13" stroke-width="0.9" stroke-dasharray="1.2 13.35"/>
<polyline points="2.0,318.5 3.0,316.6 4.0,314.6 5.0,312.7 6.0,310.8 7.0,308.9 8.0,307.0 9.0,305.2 10.0,303.3 11.0,301.5 12.0,299.6 13.0,297.8 14.0,296.1 15.0,294.3 16.0,292.6 17.0,290.9 18.0,289.2 19.0,287.6 20.0,286.0 21.0,284.5 22.0,283.0 23.0,281.5 24.0,280.1 25.0,278.7 26.0,277.4 27.0,276.1 28.0,274.9 29.0,273.7 30.0,272.6 31.0,271.5 32.0,270.5 33.0,269.6 34.0,268.7 35.0,267.8 36.0,267.1 37.0,266.3 38.0,265.7 39.0,265.1 40.0,264.6 41.0,264.1 42.0,263.7 43.0,263.4 44.0,263.1 45.0,262.9 46.0,262.8 47.0,262.7 48.0,262.7 49.0,262.8 50.0,262.9 51.0,263.1 52.0,263.4 53.0,263.7 54.0,264.1 55.0,264.5 56.0,265.1 57.0,265.7 58.0,266.3 59.0,267.0 60.0,267.8 61.0,268.6 62.0,269.5 63.0,270.5 64.0,271.5 65.0,272.5 66.0,273.7 67.0,274.8 68.0,276.1 69.0,277.3 70.0,278.7 71.0,280.0 72.0,281.5 73.0,282.9 74.0,284.4 75.0,286.0 76.0,287.5 77.0,289.2 78.0,290.8 79.0,292.5 80.0,294.2 81.0,296.0 82.0,297.7 83.0,299.5 84.0,301.4 85.0,303.2 86.0,305.1 87.0,306.9 88.0,308.8 89.0,310.7 90.0,312.6 91.0,314.6 92.0,316.5 93.0,318.4 94.0,320.3 95.0,322.2 96.0,324.2 97.0,326.1 98.0,328.0 99.0,329.8 100.0,331.7 101.0,333.6 102.0,335.4 103.0,337.2 104.0,339.0 105.0,340.8 106.0,342.5 107.0,344.3 108.0,345.9 109.0,347.6 110.0,349.2 111.0,350.8 112.0,352.3 113.0,353.8 114.0,355.3 115.0,356.7 116.0,358.1 117.0,359.4 118.0,360.7 119.0,361.9 120.0,363.0 121.0,364.2 122.0,365.2 123.0,366.2 124.0,367.2 125.0,368.1 126.0,368.9 127.0,369.7 128.0,370.4 129.0,371.0 130.0,371.6 131.0,372.1 132.0,372.6 133.0,372.9 134.0,373.3 135.0,373.5 136.0,373.7 137.0,373.8 138.0,373.9 139.0,373.9 140.0,373.8 141.0,373.7 142.0,373.5 143.0,373.2 144.0,372.9 145.0,372.4 146.0,372.0 147.0,371.4 148.0,370.8 149.0,370.2 150.0,369.5 151.0,368.7 152.0,367.8 153.0,366.9 154.0,366.0 155.0,365.0 156.0,363.9 157.0,362.8 158.0,361.6 159.0,360.3 160.0,359.1 161.0,357.7 162.0,356.4 163.0,354.9 164.0,353.5 165.0,352.0 166.0,350.4 167.0,348.8 168.0,347.2 169.0,345.5 170.0,343.8 171.0,342.1 172.0,340.4 173.0,338.6 174.0,336.8 175.0,335.0 176.0,333.1 177.0,331.3 178.0,329.4 179.0,327.5 180.0,325.6 181.0,323.7 182.0,321.8 183.0,319.8 184.0,317.9 185.0,316.0 186.0,314.1 187.0,312.2 188.0,310.3 189.0,308.4 190.0,306.5 191.0,304.6 192.0,302.7 193.0,300.9 194.0,299.1 195.0,297.3 196.0,295.5 197.0,293.8 198.0,292.1 199.0,290.4 200.0,288.8 201.0,287.1 202.0,285.6 203.0,284.0 204.0,282.5 205.0,281.1 206.0,279.7 207.0,278.3 208.0,277.0 209.0,275.8 210.0,274.5 211.0,273.4 212.0,272.3 213.0,271.2 214.0,270.2 215.0,269.3 216.0,268.4 217.0,267.6 218.0,266.8 219.0,266.1 220.0,265.5 221.0,264.9 222.0,264.4 223.0,264.0 224.0,263.6 225.0,263.3 226.0,263.0 227.0,262.9 228.0,262.7 229.0,262.7 230.0,262.7 231.0,262.8 232.0,263.0 233.0,263.2 234.0,263.5 235.0,263.8 236.0,264.2 237.0,264.7 238.0,265.2 239.0,265.8 240.0,266.5 241.0,267.2 242.0,268.0 243.0,268.9 244.0,269.8 245.0,270.8 246.0,271.8 247.0,272.9 248.0,274.0 249.0,275.2 250.0,276.4 251.0,277.7 252.0,279.1 253.0,280.5 254.0,281.9 255.0,283.4 256.0,284.9 257.0,286.4 258.0,288.0 259.0,289.7 260.0,291.3 261.0,293.0 262.0,294.7 263.0,296.5 264.0,298.3 265.0,300.1 266.0,301.9 267.0,303.8 268.0,305.6 269.0,307.5 270.0,309.4 271.0,311.3 272.0,313.2 273.0,315.1 274.0,317.1 275.0,319.0 276.0,320.9 277.0,322.8 278.0,324.7 279.0,326.6 280.0,328.5 281.0,330.4 282.0,332.3 283.0,334.1 284.0,336.0 285.0,337.8 286.0,339.6 287.0,341.3 288.0,343.1 289.0,344.8 290.0,346.4 291.0,348.1 292.0,349.7 293.0,351.3 294.0,352.8 295.0,354.3 296.0,355.7 297.0,357.1 298.0,358.5 299.0,359.8 300.0,361.0 301.0,362.2 302.0,363.4 303.0,364.5 304.0,365.5 305.0,366.5 306.0,367.4 307.0,368.3 308.0,369.1 309.0,369.9 310.0,370.6 311.0,371.2 312.0,371.7 313.0,372.2 314.0,372.7 315.0,373.0 316.0,373.3 317.0,373.6 318.0,373.8 319.0,373.9 320.0,373.9 321.0,373.9 322.0,373.8 323.0,373.6 324.0,373.4 325.0,373.1 326.0,372.7 327.0,372.3 328.0,371.8 329.0,371.3 330.0,370.7 331.0,370.0 332.0,369.2 333.0,368.4 334.0,367.6 335.0,366.7 336.0,365.7 337.0,364.6 338.0,363.6 339.0,362.4 340.0,361.2 341.0,360.0 342.0,358.7 343.0,357.3 344.0,355.9 345.0,354.5 346.0,353.0 347.0,351.5 348.0,349.9 349.0,348.3 350.0,346.7 351.0,345.0 352.0,343.3 353.0,341.6 354.0,339.8 355.0,338.0 356.0,336.2 357.0,334.4 358.0,332.6 359.0,330.7 360.0,328.8 361.0,326.9 362.0,325.0 363.0,323.1 364.0,321.2 365.0,319.3 366.0,317.3 367.0,315.4 368.0,313.5 369.0,311.6 370.0,309.7 371.0,307.8 372.0,305.9 373.0,304.0 374.0,302.2 375.0,300.4 376.0,298.6 377.0,296.8 378.0,295.0 379.0,293.3 380.0,291.6 381.0,289.9 382.0,288.3 383.0,286.7 384.0,285.1 385.0,283.6 386.0,282.1 387.0,280.7 388.0,279.3 389.0,277.9 390.0,276.6 391.0,275.4 392.0,274.2 393.0,273.0 394.0,272.0 395.0,270.9 396.0,269.9 397.0,269.0 398.0,268.2 399.0,267.4 400.0,266.6 401.0,265.9 402.0,265.3 403.0,264.8 404.0,264.3 405.0,263.9 406.0,263.5 407.0,263.2 408.0,263.0 409.0,262.8 410.0,262.7 411.0,262.7 412.0,262.7 413.0,262.8 414.0,263.0 415.0,263.3 416.0,263.6 417.0,263.9 418.0,264.4 419.0,264.9 420.0,265.4 421.0,266.0 422.0,266.7 423.0,267.5 424.0,268.3 425.0,269.2 426.0,270.1 427.0,271.1 428.0,272.1 429.0,273.2 430.0,274.4 431.0,275.6 432.0,276.8 433.0,278.1 434.0,279.5 435.0,280.9 436.0,282.3 437.0,283.8 438.0,285.3 439.0,286.9 440.0,288.5 441.0,290.2 442.0,291.8 443.0,293.5 444.0,295.3 445.0,297.0 446.0,298.8 447.0,300.6 448.0,302.5 449.0,304.3 450.0,306.2 451.0,308.1 452.0,310.0 453.0,311.9 454.0,313.8 455.0,315.7 456.0,317.6 457.0,319.5 458.0,321.5 459.0,323.4 460.0,325.3 461.0,327.2 462.0,329.1 463.0,331.0 464.0,332.8 465.0,334.7 466.0,336.5 467.0,338.3 468.0,340.1 469.0,341.9 470.0,343.6 471.0,345.3 472.0,346.9 473.0,348.6 474.0,350.2 475.0,351.7 476.0,353.2 477.0,354.7 478.0,356.1 479.0,357.5 480.0,358.9 481.0,360.2 482.0,361.4 483.0,362.6 484.0,363.7 485.0,364.8 486.0,365.8 487.0,366.8 488.0,367.7 489.0,368.6 490.0,369.4 491.0,370.1 492.0,370.8 493.0,371.4 494.0,371.9 495.0,372.4 496.0,372.8 497.0,373.1 498.0,373.4 499.0,373.6 500.0,373.8 501.0,373.9 502.0,373.9 503.0,373.9 504.0,373.7 505.0,373.6 506.0,373.3 507.0,373.0 508.0,372.6 509.0,372.2 510.0,371.7 511.0,371.1 512.0,370.5 513.0,369.8 514.0,369.0 515.0,368.2 516.0,367.3 517.0,366.4 518.0,365.4 519.0,364.3 520.0,363.2 521.0,362.1 522.0,360.8 523.0,359.6 524.0,358.3 525.0,356.9 526.0,355.5 527.0,354.1 528.0,352.6 529.0,351.0 530.0,349.5 531.0,347.8 532.0,346.2 533.0,344.5 534.0,342.8 535.0,341.1 536.0,339.3 537.0,337.5 538.0,335.7 539.0,333.9 540.0,332.0 541.0,330.1 542.0,328.2 543.0,326.3 544.0,324.4 545.0,322.5 546.0,320.6 547.0,318.7 548.0,316.8 549.0,314.8 550.0,312.9 551.0,311.0 552.0,309.1 553.0,307.2 554.0,305.3 555.0,303.5 556.0,301.6 557.0,299.8 558.0,298.0 559.0,296.2 560.0,294.5 561.0,292.8 562.0,291.1 563.0,289.4 564.0,287.8 565.0,286.2 566.0,284.6 567.0,283.1 568.0,281.7 569.0,280.2 570.0,278.9 571.0,277.5 572.0,276.3 573.0,275.0 574.0,273.8 575.0,272.7 576.0,271.6 577.0,270.6 578.0,269.7 579.0,268.8 580.0,267.9 581.0,267.1 582.0,266.4 583.0,265.8 584.0,265.2 585.0,264.6 586.0,264.2 587.0,263.7 588.0,263.4 589.0,263.1 590.0,262.9 591.0,262.8 592.0,262.7 593.0,262.7 594.0,262.8 595.0,262.9 596.0,263.1 597.0,263.3 598.0,263.7 599.0,264.0 600.0,264.5 601.0,265.0 602.0,265.6 603.0,266.2 604.0,266.9 605.0,267.7 606.0,268.5 607.0,269.4 608.0,270.4 609.0,271.4 610.0,272.4 611.0,273.6 612.0,274.7 613.0,275.9 614.0,277.2 615.0,278.5 616.0,279.9 617.0,281.3 618.0,282.8 619.0,284.3 620.0,285.8 621.0,287.4 622.0,289.0 623.0,290.7 624.0,292.3 625.0,294.1 626.0,295.8 627.0,297.6 628.0,299.4 629.0,301.2 630.0,303.0 631.0,304.9 632.0,306.8 633.0,308.6 634.0,310.5 635.0,312.4 636.0,314.4 637.0,316.3 638.0,318.2 639.0,320.1 640.0,322.0 641.0,324.0 642.0,325.9 643.0,327.8 644.0,329.7 645.0,331.5 646.0,333.4 647.0,335.2 648.0,337.1 649.0,338.9 650.0,340.6 651.0,342.4 652.0,344.1 653.0,345.8 654.0,347.4 655.0,349.1 656.0,350.6 657.0,352.2 658.0,353.7 659.0,355.1 660.0,356.6 661.0,357.9 662.0,359.3 663.0,360.5 664.0,361.8 665.0,362.9 666.0,364.1 667.0,365.1 668.0,366.1 669.0,367.1 670.0,368.0 671.0,368.8 672.0,369.6 673.0,370.3 674.0,370.9 675.0,371.5 676.0,372.1 677.0,372.5 678.0,372.9 679.0,373.2 680.0,373.5 681.0,373.7 682.0,373.8 683.0,373.9 684.0,373.9 685.0,373.8 686.0,373.7 687.0,373.5 688.0,373.2 689.0,372.9 690.0,372.5 691.0,372.0 692.0,371.5 693.0,370.9 694.0,370.3 695.0,369.5 696.0,368.8 697.0,367.9 698.0,367.0 699.0,366.1 700.0,365.1 701.0,364.0 702.0,362.9 703.0,361.7 704.0,360.5 705.0,359.2 706.0,357.9 707.0,356.5 708.0,355.1 709.0,353.6 710.0,352.1 711.0,350.6 712.0,349.0 713.0,347.4 714.0,345.7 715.0,344.0 716.0,342.3 717.0,340.5 718.0,338.8 719.0,337.0 720.0,335.1 721.0,333.3 722.0,331.4 723.0,329.6 724.0,327.7 725.0,325.8 726.0,323.9 727.0,322.0 728.0,320.0 729.0,318.1" fill="none" stroke="#24a2a8" stroke-width="2.1" stroke-linejoin="round"/>
<path d="M2.0 311.0C2.5 311.2 3.4 312.4 5.0 312.5C6.6 312.6 10.6 311.6 12.5 312.0C14.4 312.4 16.2 314.1 17.5 315.0C18.8 315.9 19.5 317.9 21.0 318.0C22.5 318.1 25.8 315.6 27.5 316.0C29.2 316.4 31.2 319.8 32.5 321.0C33.8 322.2 34.9 324.0 36.0 324.0C37.1 324.0 38.8 322.2 40.0 321.0C41.2 319.8 42.9 316.9 44.0 316.0C45.1 315.1 46.5 314.8 47.5 315.0C48.5 315.2 49.9 317.1 51.0 317.5C52.1 317.9 53.8 318.0 55.0 317.5C56.2 317.0 57.9 314.4 59.0 314.0C60.1 313.6 61.5 314.7 62.5 315.0C63.5 315.3 64.9 316.6 66.0 316.0C67.1 315.4 69.0 312.3 70.0 311.0C71.0 309.7 71.8 307.8 72.5 307.5C73.2 307.2 74.2 309.4 75.0 309.0C75.8 308.6 76.8 304.9 77.5 305.0C78.2 305.1 79.2 308.9 80.0 310.0C80.8 311.1 81.6 312.9 82.5 312.5C83.4 312.1 85.0 308.0 86.0 307.5C87.0 307.0 88.2 309.4 89.0 309.0C89.8 308.6 90.2 305.6 91.0 305.0C91.8 304.4 93.2 304.2 94.0 305.0C94.8 305.8 95.1 308.9 96.0 310.0C96.9 311.1 98.7 312.5 100.0 312.5C101.3 312.5 103.7 310.2 105.0 310.0C106.3 309.8 107.9 309.6 109.0 311.0C110.1 312.4 111.6 317.3 112.5 319.0C113.4 320.7 114.0 323.1 115.0 322.5C116.0 321.9 118.1 316.3 119.0 315.0C119.9 313.7 120.1 313.6 121.0 314.0C121.9 314.4 124.0 316.2 125.0 317.5C126.0 318.8 126.6 321.8 127.5 322.5C128.4 323.2 130.0 323.0 131.0 322.5C132.0 322.0 133.0 319.2 134.0 319.0C135.0 318.8 136.4 320.1 137.5 321.0C138.6 321.9 139.9 324.8 141.0 325.0C142.1 325.2 143.7 323.9 145.0 322.5C146.3 321.1 148.7 317.3 150.0 316.0C151.3 314.7 152.9 314.0 154.0 314.0C155.1 314.0 156.4 315.1 157.5 316.0C158.6 316.9 159.9 319.6 161.0 320.0C162.1 320.4 163.7 319.8 165.0 319.0C166.3 318.2 168.5 315.8 170.0 315.0C171.5 314.2 173.7 314.9 175.0 314.0C176.3 313.1 178.1 310.0 179.0 309.0C179.9 308.0 180.2 307.4 181.0 307.5C181.8 307.6 183.2 308.9 184.0 310.0C184.8 311.1 185.1 314.1 186.0 315.0C186.9 315.9 188.8 316.6 190.0 316.0C191.2 315.4 193.1 312.1 194.0 311.0C194.9 309.9 195.1 309.0 196.0 309.0C196.9 309.0 198.7 310.2 200.0 311.0C201.3 311.8 203.5 313.6 205.0 314.0C206.5 314.4 208.7 314.4 210.0 314.0C211.3 313.6 212.9 311.0 214.0 311.0C215.1 311.0 216.4 312.8 217.5 314.0C218.6 315.2 220.0 318.5 221.0 319.0C222.0 319.5 223.2 318.7 224.0 317.5C224.8 316.3 225.1 312.7 226.0 311.0C226.9 309.3 228.8 306.5 230.0 306.0C231.2 305.5 232.9 307.1 234.0 307.5C235.1 307.9 236.4 309.0 237.5 309.0C238.6 309.0 239.9 307.4 241.0 307.5C242.1 307.6 243.8 310.4 245.0 310.0C246.2 309.6 247.9 306.6 249.0 305.0C250.1 303.4 251.6 300.4 252.5 299.0C253.4 297.6 254.0 296.0 255.0 296.0C256.0 296.0 258.1 299.3 259.0 299.0C259.9 298.7 260.2 295.2 261.0 294.0C261.8 292.8 263.2 290.5 264.0 291.0C264.8 291.5 265.2 295.6 266.0 297.5C266.8 299.4 268.0 302.7 269.0 304.0C270.0 305.3 271.4 305.7 272.5 306.0C273.6 306.3 275.0 306.3 276.0 306.0C277.0 305.7 278.2 305.5 279.0 304.0C279.8 302.5 280.2 297.4 281.0 296.0C281.8 294.6 283.2 294.4 284.0 295.0C284.8 295.6 285.1 298.9 286.0 300.0C286.9 301.1 288.8 301.9 290.0 302.5C291.2 303.1 293.1 303.0 294.0 304.0C294.9 305.0 295.1 307.4 296.0 309.0C296.9 310.6 298.8 313.4 300.0 315.0C301.2 316.6 303.1 319.9 304.0 320.0C304.9 320.1 305.2 317.1 306.0 316.0C306.8 314.9 308.2 312.5 309.0 312.5C309.8 312.5 310.1 315.0 311.0 316.0C311.9 317.0 313.8 318.0 315.0 319.0C316.2 320.0 317.9 321.6 319.0 322.5C320.1 323.4 321.6 324.2 322.5 325.0C323.4 325.8 324.0 327.4 325.0 327.5C326.0 327.6 327.9 326.5 329.0 326.0C330.1 325.5 331.4 323.9 332.5 324.0C333.6 324.1 334.9 326.9 336.0 327.0C337.1 327.1 338.8 325.7 340.0 325.0C341.2 324.3 342.9 322.4 344.0 322.5C345.1 322.6 346.4 325.0 347.5 326.0C348.6 327.0 349.9 328.7 351.0 329.0C352.1 329.3 353.8 328.6 355.0 328.0C356.2 327.4 358.1 325.8 359.0 325.0C359.9 324.2 360.2 322.9 361.0 323.0C361.8 323.1 363.0 325.2 364.0 326.0C365.0 326.8 366.4 327.9 367.5 328.0C368.6 328.1 369.9 327.6 371.0 327.0C372.1 326.4 374.0 324.2 375.0 324.0C376.0 323.8 376.8 325.6 377.5 325.5C378.2 325.4 379.0 322.5 380.0 323.0C381.0 323.5 382.9 328.9 384.0 329.0C385.1 329.1 386.6 325.1 387.5 324.0C388.4 322.9 389.2 321.8 390.0 322.0C390.8 322.2 391.6 325.2 392.5 325.5C393.4 325.8 394.9 325.0 396.0 324.0C397.1 323.0 398.8 320.2 400.0 319.0C401.2 317.8 403.1 316.6 404.0 316.0C404.9 315.4 405.2 314.6 406.0 315.0C406.8 315.4 408.2 319.0 409.0 319.0C409.8 319.0 410.2 315.2 411.0 315.0C411.8 314.8 413.2 317.6 414.0 317.5C414.8 317.4 415.1 315.1 416.0 314.0C416.9 312.9 418.8 311.0 420.0 310.0C421.2 309.0 422.9 307.9 424.0 307.5C425.1 307.1 426.4 307.4 427.5 307.0C428.6 306.6 430.0 305.9 431.0 305.0C432.0 304.1 433.0 302.1 434.0 301.0C435.0 299.9 436.6 298.4 437.5 297.5C438.4 296.6 439.0 295.2 440.0 295.0C441.0 294.8 443.1 295.4 444.0 296.0C444.9 296.6 445.1 298.7 446.0 299.0C446.9 299.3 448.8 298.4 450.0 298.0C451.2 297.6 453.1 296.4 454.0 296.0C454.9 295.6 455.2 294.8 456.0 295.0C456.8 295.2 458.0 297.5 459.0 297.5C460.0 297.5 461.4 295.4 462.5 295.0C463.6 294.6 465.0 295.3 466.0 295.0C467.0 294.7 468.2 292.6 469.0 293.0C469.8 293.4 470.1 296.4 471.0 297.5C471.9 298.6 474.0 299.5 475.0 300.0C476.0 300.5 476.8 300.1 477.5 301.0C478.2 301.9 479.0 305.0 480.0 306.0C481.0 307.0 482.9 307.5 484.0 307.5C485.1 307.5 486.2 306.2 487.5 306.0C488.8 305.8 491.2 306.1 492.5 306.0C493.8 305.9 495.0 304.4 496.0 305.0C497.0 305.6 498.2 308.6 499.0 310.0C499.8 311.4 500.1 313.6 501.0 314.0C501.9 314.4 504.0 312.9 505.0 313.0C506.0 313.1 506.8 314.1 507.5 315.0C508.2 315.9 509.0 318.6 510.0 319.0C511.0 319.4 512.9 317.9 514.0 317.5C515.1 317.1 516.5 315.6 517.5 316.0C518.5 316.4 519.9 319.0 521.0 320.0C522.1 321.0 523.8 322.6 525.0 322.5C526.2 322.4 527.9 319.4 529.0 319.0C530.1 318.6 531.6 320.2 532.5 320.0C533.4 319.8 534.0 317.4 535.0 317.5C536.0 317.6 537.9 320.6 539.0 321.0C540.1 321.4 541.2 320.5 542.5 320.0C543.8 319.5 546.2 317.5 547.5 317.5C548.8 317.5 549.9 319.0 551.0 320.0C552.1 321.0 553.8 322.9 555.0 324.0C556.2 325.1 558.1 326.6 559.0 327.5C559.9 328.4 560.1 330.2 561.0 330.0C561.9 329.8 563.8 326.8 565.0 326.0C566.2 325.2 567.9 325.8 569.0 325.0C570.1 324.2 571.6 321.8 572.5 321.0C573.4 320.2 574.0 319.7 575.0 320.0C576.0 320.3 577.9 322.4 579.0 323.0C580.1 323.6 581.5 323.6 582.5 324.0C583.5 324.4 584.9 325.9 586.0 326.0C587.1 326.1 589.0 324.8 590.0 325.0C591.0 325.2 591.6 327.6 592.5 327.5C593.4 327.4 594.9 325.1 596.0 324.0C597.1 322.9 598.8 321.2 600.0 320.0C601.2 318.8 603.1 316.1 604.0 316.0C604.9 315.9 605.1 319.1 606.0 319.0C606.9 318.9 608.8 316.0 610.0 315.0C611.2 314.0 612.9 312.6 614.0 312.5C615.1 312.4 616.6 314.7 617.5 314.5C618.4 314.3 619.0 311.5 620.0 311.0C621.0 310.5 623.1 311.5 624.0 311.0C624.9 310.5 625.2 308.8 626.0 307.5C626.8 306.2 628.2 303.5 629.0 302.5C629.8 301.5 630.2 300.7 631.0 301.0C631.8 301.3 633.2 303.5 634.0 304.5C634.8 305.5 635.2 306.7 636.0 307.5C636.8 308.3 638.2 309.2 639.0 310.0C639.8 310.8 640.2 312.6 641.0 312.5C641.8 312.4 643.2 309.8 644.0 309.0C644.8 308.2 645.2 307.9 646.0 307.5C646.8 307.1 648.2 306.0 649.0 306.0C649.8 306.0 650.2 306.8 651.0 307.5C651.8 308.2 653.0 310.3 654.0 310.5C655.0 310.7 656.5 309.4 657.5 309.0C658.5 308.6 659.9 307.4 661.0 307.5C662.1 307.6 663.8 309.5 665.0 309.5C666.2 309.5 667.9 307.4 669.0 307.5C670.1 307.6 671.5 309.2 672.5 310.0C673.5 310.8 675.0 311.9 676.0 312.5C677.0 313.1 678.2 314.8 679.0 314.0C679.8 313.2 680.2 308.7 681.0 307.5C681.8 306.3 683.2 305.6 684.0 306.0C684.8 306.4 685.1 309.0 686.0 310.0C686.9 311.0 688.8 311.8 690.0 312.5C691.2 313.2 692.9 314.4 694.0 314.5C695.1 314.6 696.5 313.1 697.5 313.0C698.5 312.9 699.9 313.6 701.0 314.0C702.1 314.4 703.8 315.7 705.0 315.5C706.2 315.3 707.9 312.6 709.0 312.5C710.1 312.4 711.5 314.1 712.5 314.5C713.5 314.9 714.9 315.5 716.0 315.5C717.1 315.5 718.8 315.2 720.0 314.5C721.2 313.8 723.1 312.0 724.0 311.0C724.9 310.0 725.2 308.1 726.0 308.0C726.8 307.9 728.5 310.1 729.0 310.5" fill="none" stroke="#b4ac22" stroke-width="1.8" stroke-linejoin="round" stroke-linecap="round"/>
<path d="M2.8 313.8H13L17.4 318.9L13 324H2.8Z" fill="#22ccd8"/>
<path d="M722.5 318.8L728.5 313.5V317.3H731V320.3H728.5V324Z" fill="#22ccd8"/>
<path d="M361.2 229H369.8V236.5L365.5 240L361.2 236.5Z" fill="#1a0d00" stroke="#e8821e" stroke-width="1.1"/>
<path d="M244.5 216.2V223.4M244.5 219.9H486.5M486.5 216.2V223.4" stroke="#b8b8b8" stroke-width="1.1" fill="none"/>
<path d="M244.5 216.6H246.7M244.5 223H246.7M486.5 216.6H484.3M486.5 223H484.3" stroke="#b8b8b8" stroke-width="0.8" fill="none"/>
<rect x="362.4" y="214.2" width="6.2" height="3" fill="#d8761a"/>
<circle cx="365.5" cy="219.8" r="2.7" fill="#c86c18"/><circle cx="365.5" cy="219.8" r="1.1" fill="#4a2808"/>
<path d="M361.8 222.6H369.2L365.5 227.9Z" fill="#e07c1c"/>
</svg>
<span class="t" style="left:8.00px;top:58px;font-size:5.4px;line-height:5.4px;color:#d8d8d8;font-weight:bold;transform:scaleX(0.9181);">50 dB</span>
<span class="t" style="left:8.20px;top:117px;font-size:5.4px;line-height:5.4px;color:#d8d8d8;font-weight:bold;transform:scaleX(0.9144);">0 dB</span>
<span class="t" style="left:7.50px;top:175px;font-size:5.4px;line-height:5.4px;color:#d8d8d8;font-weight:bold;transform:scaleX(0.9272);">-50 dB</span>
<span class="t" style="left:715.50px;top:69px;font-size:5.2px;line-height:5.2px;color:#d8d8d8;font-weight:bold;transform:scaleX(0.8607);">100 °</span>
<span class="t" style="left:720.50px;top:116px;font-size:5.2px;line-height:5.2px;color:#d8d8d8;font-weight:bold;transform:scaleX(0.8573);">0 °</span>
<span class="t" style="left:713.50px;top:163px;font-size:5.2px;line-height:5.2px;color:#d8d8d8;font-weight:bold;transform:scaleX(0.8973);">-100 °</span>
<span class="t" style="left:114.50px;top:208px;font-size:5px;line-height:5px;color:#e0e0e0;font-weight:bold;transform:scaleX(1.0100);">100 Hz</span>
<span class="t" style="left:238.00px;top:208px;font-size:5px;line-height:5px;color:#e0e0e0;font-weight:bold;transform:scaleX(0.9188);">1 kHz</span>
<span class="t" style="left:357.75px;top:208px;font-size:5px;line-height:5px;color:#e0e0e0;font-weight:bold;transform:scaleX(0.9784);">10 kHz</span>
<span class="t" style="left:478.00px;top:208px;font-size:5px;line-height:5px;color:#e0e0e0;font-weight:bold;transform:scaleX(0.9666);">100 kHz</span>
<span class="t" style="left:602.00px;top:208px;font-size:5px;line-height:5px;color:#e0e0e0;font-weight:bold;transform:scaleX(0.8999);">1 MHz</span>
<span class="t" style="left:671.00px;top:36px;font-size:7px;line-height:7px;color:#0e8a1c;transform:scaleX(0.9807);">Gain</span>
<span class="t" style="left:671.00px;top:46px;font-size:7px;line-height:7px;color:#c81418;transform:scaleX(0.9321);">Phase</span>
<span class="t" style="left:4.20px;top:318px;font-size:5px;line-height:5px;color:#063c40;font-weight:bold;transform:scaleX(1.0170);">C2</span>
<span class="t" style="left:363.51px;top:232px;font-size:6.5px;line-height:6.5px;color:#f0a040;font-weight:bold;">T</span>
<span class="t" style="left:702.30px;top:243px;font-size:5.7px;line-height:5.7px;color:#1c98a0;font-weight:bold;transform:scaleX(0.8965);">42.740 mV</span>
<span class="t" style="left:702.30px;top:262px;font-size:5.7px;line-height:5.7px;color:#1c98a0;font-weight:bold;transform:scaleX(0.8965);">32.055 mV</span>
<span class="t" style="left:702.30px;top:281px;font-size:5.7px;line-height:5.7px;color:#1c98a0;font-weight:bold;transform:scaleX(0.8965);">21.370 mV</span>
<span class="t" style="left:702.30px;top:299px;font-size:5.7px;line-height:5.7px;color:#1c98a0;font-weight:bold;transform:scaleX(0.8965);">10.685 mV</span>
<span class="t" style="left:700.30px;top:337px;font-size:5.7px;line-height:5.7px;color:#1c98a0;font-weight:bold;transform:scaleX(0.9065);">-10.685 mV</span>
<span class="t" style="left:700.30px;top:356px;font-size:5.7px;line-height:5.7px;color:#1c98a0;font-weight:bold;transform:scaleX(0.9065);">-21.370 mV</span>
<span class="t" style="left:700.30px;top:375px;font-size:5.7px;line-height:5.7px;color:#1c98a0;font-weight:bold;transform:scaleX(0.9065);">-32.055 mV</span>
<span class="t" style="left:700.30px;top:394px;font-size:5.7px;line-height:5.7px;color:#1c98a0;font-weight:bold;transform:scaleX(0.9065);">-42.740 mV</span>
<div class="r" style="left:1.5px;top:404.2px;width:727.8px;height:1.4px;background:#258a88;"></div>
<div class="r" style="left:1.5px;top:405.5px;width:727.8px;height:7.3px;background:#38623a;"></div>
<span class="t" style="left:66.35px;top:408px;font-size:5.2px;line-height:5.2px;color:#a8c4aa;font-weight:bold;">-1.6 µs</span>
<span class="t" style="left:139.10px;top:408px;font-size:5.2px;line-height:5.2px;color:#a8c4aa;font-weight:bold;">-1.2 µs</span>
<span class="t" style="left:211.04px;top:408px;font-size:5.2px;line-height:5.2px;color:#a8c4aa;font-weight:bold;">-800 ns</span>
<span class="t" style="left:283.79px;top:408px;font-size:5.2px;line-height:5.2px;color:#a8c4aa;font-weight:bold;">-400 ns</span>
<span class="t" style="left:361.89px;top:408px;font-size:5.2px;line-height:5.2px;color:#a8c4aa;font-weight:bold;">0 s</span>
<span class="t" style="left:430.16px;top:408px;font-size:5.2px;line-height:5.2px;color:#a8c4aa;font-weight:bold;">400 ns</span>
<span class="t" style="left:502.91px;top:408px;font-size:5.2px;line-height:5.2px;color:#a8c4aa;font-weight:bold;">800 ns</span>
<span class="t" style="left:576.47px;top:408px;font-size:5.2px;line-height:5.2px;color:#a8c4aa;font-weight:bold;">1.2 µs</span>
<span class="t" style="left:649.22px;top:408px;font-size:5.2px;line-height:5.2px;color:#a8c4aa;font-weight:bold;">1.6 µs</span>
<div class="r" style="left:0px;top:414.5px;width:800px;height:36px;background:#2e2e2e;"></div>
<div class="r" style="left:0px;top:412.8px;width:731px;height:1.7px;background:#949a9a;"></div>
<div class="r" style="left:1.2px;top:416px;width:37.5px;height:36px;background:#c8c8c8;border-radius:2px;"></div>
<div class="r" style="left:1.2px;top:416px;width:37.5px;height:8px;background:#5a5420;border-radius:2px 2px 0 0;"></div>
<span class="t" style="left:3.60px;top:418px;font-size:6.4px;line-height:6.4px;color:#f0e838;font-weight:bold;transform:scaleX(0.8148);">Ch 1</span>
<div class="r" style="left:40.7px;top:416px;width:37.5px;height:36px;background:#c8c8c8;border-radius:2px;"></div>
<div class="r" style="left:40.7px;top:416px;width:37.5px;height:8px;background:#20c4d0;border-radius:2px 2px 0 0;"></div>
<span class="t" style="left:43.10px;top:418px;font-size:6.4px;line-height:6.4px;color:#0a3236;font-weight:bold;transform:scaleX(0.8148);">Ch 2</span>
<span class="t" style="left:4.00px;top:428px;font-size:6.0px;line-height:6.0px;color:#3e3e3e;transform:scaleX(1.0185);">500 µV/div</span>
<span class="t" style="left:4.00px;top:436px;font-size:6.0px;line-height:6.0px;color:#3e3e3e;transform:scaleX(1.0355);">1 MΩ</span>
<span class="t" style="left:4.00px;top:444px;font-size:6.0px;line-height:6.0px;color:#3e3e3e;transform:scaleX(0.9917);">20 MHz</span>
<span class="t" style="left:43.80px;top:428px;font-size:6.0px;line-height:6.0px;color:#3e3e3e;">10.685 m...</span>
<span class="t" style="left:43.80px;top:436px;font-size:6.0px;line-height:6.0px;color:#3e3e3e;transform:scaleX(1.0355);">1 MΩ</span>
<span class="t" style="left:43.80px;top:444px;font-size:6.0px;line-height:6.0px;color:#3e3e3e;transform:scaleX(0.9917);">20 MHz</span>
<svg class="r" style="left:23.5px;top:434.5px" width="8" height="6" viewBox="0 0 8 6"><path d="M0.5 3.5C1.5 0.5 2.7 0.5 3.7 3C4.7 5.5 6 5.5 7.2 2.7" stroke="#484848" stroke-width="0.9" fill="none"/></svg>
<svg class="r" style="left:30.5px;top:442.3px" width="7" height="6" viewBox="0 0 7 6"><path d="M1 1.5H3.2V4.2H6" stroke="#333" stroke-width="1.3" fill="none"/><circle cx="1.3" cy="1.5" r="1.1" fill="#333"/><circle cx="5.6" cy="4.2" r="1.1" fill="#333"/></svg>
<svg class="r" style="left:63px;top:434.5px" width="8" height="6" viewBox="0 0 8 6"><path d="M0.5 3.5C1.5 0.5 2.7 0.5 3.7 3C4.7 5.5 6 5.5 7.2 2.7" stroke="#484848" stroke-width="0.9" fill="none"/></svg>
<svg class="r" style="left:70px;top:442.3px" width="7" height="6" viewBox="0 0 7 6"><path d="M1 1.5H3.2V4.2H6" stroke="#333" stroke-width="1.3" fill="none"/><circle cx="1.3" cy="1.5" r="1.1" fill="#333"/><circle cx="5.6" cy="4.2" r="1.1" fill="#333"/></svg>
<div class="r" style="left:171px;top:416.3px;width:16.3px;height:32.5px;background:#2e2e2e;border:1px solid #474747;border-radius:2px;box-sizing:border-box;"></div>
<div class="r" style="left:172.4px;top:418.3px;width:13.5px;height:2.2px;background:#b03a58;border-radius:1px;"></div>
<span class="t" style="left:176.65px;top:431px;font-size:9px;line-height:9px;color:#c4c4c4;font-weight:bold;">3</span>
<div class="r" style="left:190px;top:416.3px;width:16.3px;height:32.5px;background:#2e2e2e;border:1px solid #474747;border-radius:2px;box-sizing:border-box;"></div>
<div class="r" style="left:191.4px;top:418.3px;width:13.5px;height:2.2px;background:#78a83c;border-radius:1px;"></div>
<span class="t" style="left:195.65px;top:431px;font-size:9px;line-height:9px;color:#c4c4c4;font-weight:bold;">4</span>
<div class="r" style="left:208.8px;top:416.3px;width:16.3px;height:32.5px;background:#2e2e2e;border:1px solid #474747;border-radius:2px;box-sizing:border-box;"></div>
<div class="r" style="left:210.20000000000002px;top:418.3px;width:13.5px;height:2.2px;background:#cc8028;border-radius:1px;"></div>
<span class="t" style="left:214.45px;top:431px;font-size:9px;line-height:9px;color:#c4c4c4;font-weight:bold;">5</span>
<div class="r" style="left:227.5px;top:416.3px;width:16.3px;height:32.5px;background:#2e2e2e;border:1px solid #474747;border-radius:2px;box-sizing:border-box;"></div>
<div class="r" style="left:228.9px;top:418.3px;width:13.5px;height:2.2px;background:#36289a;border-radius:1px;"></div>
<span class="t" style="left:233.15px;top:431px;font-size:9px;line-height:9px;color:#c4c4c4;font-weight:bold;">6</span>
<div class="r" style="left:246.3px;top:416.3px;width:16.3px;height:32.5px;background:#2e2e2e;border:1px solid #474747;border-radius:2px;box-sizing:border-box;"></div>
<div class="r" style="left:247.70000000000002px;top:418.3px;width:13.5px;height:2.2px;background:#b83c94;border-radius:1px;"></div>
<span class="t" style="left:251.95px;top:431px;font-size:9px;line-height:9px;color:#c4c4c4;font-weight:bold;">7</span>
<div class="r" style="left:265px;top:416.3px;width:16.3px;height:32.5px;background:#2e2e2e;border:1px solid #474747;border-radius:2px;box-sizing:border-box;"></div>
<div class="r" style="left:266.4px;top:418.3px;width:13.5px;height:2.2px;background:#1fa070;border-radius:1px;"></div>
<span class="t" style="left:270.65px;top:431px;font-size:9px;line-height:9px;color:#c4c4c4;font-weight:bold;">8</span>
<div class="r" style="left:286.3px;top:416px;width:1px;height:33.5px;background:#4a4a4a;"></div>
<div class="r" style="left:349px;top:416px;width:1px;height:33.5px;background:#4a4a4a;"></div>
<div class="r" style="left:374.3px;top:416px;width:1px;height:33.5px;background:#4a4a4a;"></div>
<div class="r" style="left:753.5px;top:416px;width:1px;height:33.5px;background:#4a4a4a;"></div>
<div class="r" style="left:290.3px;top:416.3px;width:16.3px;height:32.5px;background:#2e2e2e;border:1px solid #474747;border-radius:2px;box-sizing:border-box;"></div>
<div class="r" style="left:291.7px;top:418.3px;width:13.5px;height:2.2px;background:#d88428;border-radius:1px;"></div>
<span class="t" style="left:293.20px;top:426px;font-size:6.3px;line-height:6.3px;color:#c8c8c8;transform:scaleX(0.9367);">Add</span>
<span class="t" style="left:292.95px;top:433px;font-size:6.3px;line-height:6.3px;color:#c8c8c8;transform:scaleX(0.8728);">New</span>
<span class="t" style="left:291.95px;top:440px;font-size:6.3px;line-height:6.3px;color:#c8c8c8;transform:scaleX(0.9283);">Math</span>
<div class="r" style="left:309.3px;top:416.3px;width:16.3px;height:32.5px;background:#2e2e2e;border:1px solid #474747;border-radius:2px;box-sizing:border-box;"></div>
<div class="r" style="left:310.7px;top:418.3px;width:13.5px;height:2.2px;background:#a0a0a0;border-radius:1px;"></div>
<span class="t" style="left:312.20px;top:426px;font-size:6.3px;line-height:6.3px;color:#c8c8c8;transform:scaleX(0.9367);">Add</span>
<span class="t" style="left:311.95px;top:433px;font-size:6.3px;line-height:6.3px;color:#c8c8c8;transform:scaleX(0.8728);">New</span>
<span class="t" style="left:313.20px;top:440px;font-size:6.3px;line-height:6.3px;color:#c8c8c8;transform:scaleX(0.8670);">Ref</span>
<div class="r" style="left:328.3px;top:416.3px;width:16.3px;height:32.5px;background:#2e2e2e;border:1px solid #474747;border-radius:2px;box-sizing:border-box;"></div>
<div class="r" style="left:329.7px;top:418.3px;width:13.5px;height:2.2px;background:#a048c8;border-radius:1px;"></div>
<span class="t" style="left:331.20px;top:426px;font-size:6.3px;line-height:6.3px;color:#c8c8c8;transform:scaleX(0.9367);">Add</span>
<span class="t" style="left:330.95px;top:433px;font-size:6.3px;line-height:6.3px;color:#c8c8c8;transform:scaleX(0.8728);">New</span>
<span class="t" style="left:331.70px;top:440px;font-size:6.3px;line-height:6.3px;color:#c8c8c8;transform:scaleX(0.8751);">Bus</span>
<div class="r" style="left:353.3px;top:416.3px;width:16.3px;height:32.5px;background:#2e2e2e;border:1px solid #474747;border-radius:2px;box-sizing:border-box;"></div>
<span class="t" style="left:354.95px;top:433px;font-size:6.3px;line-height:6.3px;color:#c8c8c8;transform:scaleX(0.9286);">DVM</span>
<div class="r" style="left:380px;top:416.5px;width:81.5px;height:36px;background:#c8c8c8;border-radius:2px;"></div>
<div class="r" style="left:380px;top:416.5px;width:81.5px;height:7.6px;background:#585858;border-radius:2px 2px 0 0;"></div>
<span class="t" style="left:382.20px;top:419px;font-size:6.2px;line-height:6.2px;color:#e2e2e2;font-weight:bold;transform:scaleX(0.9177);">AFG: Sine</span>
<span class="t" style="left:382.60px;top:428px;font-size:6.0px;line-height:6.0px;color:#3e3e3e;">Freq: 1 MHz</span>
<span class="t" style="left:382.60px;top:436px;font-size:6.0px;line-height:6.0px;color:#3e3e3e;">Amp: 400 mVpp</span>
<span class="t" style="left:382.60px;top:444px;font-size:6.0px;line-height:6.0px;color:#3e3e3e;transform:scaleX(1.0094);">Offset: 0 V</span>
<div class="r" style="left:465px;top:416.5px;width:66.5px;height:36px;background:#c8c8c8;border-radius:2px;"></div>
<div class="r" style="left:465px;top:416.5px;width:66.5px;height:7.6px;background:#585858;border-radius:2px 2px 0 0;"></div>
<span class="t" style="left:467.20px;top:419px;font-size:6.2px;line-height:6.2px;color:#e2e2e2;font-weight:bold;transform:scaleX(0.9267);">Spectrum</span>
<span class="t" style="left:467.60px;top:428px;font-size:6.0px;line-height:6.0px;color:#3e3e3e;transform:scaleX(1.0430);">CF: 1.0000000 MHz</span>
<span class="t" style="left:467.60px;top:436px;font-size:6.0px;line-height:6.0px;color:#3e3e3e;transform:scaleX(0.9896);">Span: 100.000 kHz</span>
<span class="t" style="left:467.60px;top:444px;font-size:6.0px;line-height:6.0px;color:#3e3e3e;transform:scaleX(0.9384);">RBW: 100 Hz</span>
<div class="r" style="left:534.3px;top:416.5px;width:82px;height:36px;background:#c8c8c8;border-radius:2px;"></div>
<div class="r" style="left:534.3px;top:416.5px;width:82px;height:7.6px;background:#585858;border-radius:2px 2px 0 0;"></div>
<span class="t" style="left:536.50px;top:419px;font-size:6.2px;line-height:6.2px;color:#e2e2e2;font-weight:bold;transform:scaleX(1.0063);">Horizontal</span>
<span class="t" style="left:536.70px;top:428px;font-size:6.0px;line-height:6.0px;color:#3e3e3e;transform:scaleX(1.0055);">400 ns/div</span>
<span class="t" style="left:580.80px;top:428px;font-size:6.0px;line-height:6.0px;color:#3e3e3e;transform:scaleX(0.9162);">4 µs</span>
<span class="t" style="left:536.70px;top:436px;font-size:6.0px;line-height:6.0px;color:#3e3e3e;transform:scaleX(0.9551);">SR: 1.5625 GS/s</span>
<span class="t" style="left:580.80px;top:436px;font-size:6.0px;line-height:6.0px;color:#3e3e3e;transform:scaleX(0.9926);">640 ps/pt</span>
<span class="t" style="left:536.70px;top:444px;font-size:6.0px;line-height:6.0px;color:#3e3e3e;transform:scaleX(0.9901);">RL: 6.25 kpts</span>
<span class="t" style="left:588.30px;top:444px;font-size:6.0px;line-height:6.0px;color:#3e3e3e;">50%</span>
<svg class="r" style="left:580.3px;top:442.3px" width="6" height="6" viewBox="0 0 6 6"><path d="M0.8 0.8H5.2V3.6L3 5.4L0.8 3.6Z" fill="#d06a18"/><circle cx="3" cy="2.6" r="0.9" fill="#3a1a00"/></svg>
<div class="r" style="left:619.3px;top:416.5px;width:66px;height:36px;background:#c8c8c8;border-radius:2px;"></div>
<div class="r" style="left:619.3px;top:416.5px;width:66px;height:7.6px;background:#585858;border-radius:2px 2px 0 0;"></div>
<span class="t" style="left:621.50px;top:419px;font-size:6.2px;line-height:6.2px;color:#e2e2e2;font-weight:bold;transform:scaleX(0.9517);">Trigger</span>
<div class="r" style="left:621.8px;top:426px;width:12px;height:6.5px;background:#22c4d0;border-radius:2px;"></div>
<span class="t" style="left:624.86px;top:428px;font-size:4.6px;line-height:4.6px;color:#0a4a50;font-weight:bold;">C2</span>
<svg class="r" style="left:637.6px;top:425.8px" width="7" height="7" viewBox="0 0 7 7"><path d="M0.5 6H2.2L4.8 1H6.5" stroke="#484848" stroke-width="0.8" fill="none"/></svg>
<span class="t" style="left:649.00px;top:428px;font-size:6.0px;line-height:6.0px;color:#3e3e3e;transform:scaleX(1.0327);">0 V</span>
<div class="r" style="left:688.3px;top:416.5px;width:61px;height:36px;background:#c8c8c8;border-radius:2px;"></div>
<div class="r" style="left:688.3px;top:416.5px;width:61px;height:7.6px;background:#585858;border-radius:2px 2px 0 0;"></div>
<span class="t" style="left:690.50px;top:419px;font-size:6.2px;line-height:6.2px;color:#e2e2e2;font-weight:bold;transform:scaleX(0.9629);">Acquisition</span>
<span class="t" style="left:690.70px;top:428px;font-size:6.0px;line-height:6.0px;color:#3e3e3e;transform:scaleX(1.0707);">Auto,</span>
<span class="t" style="left:724.80px;top:428px;font-size:6.0px;line-height:6.0px;color:#3e3e3e;transform:scaleX(1.0073);">Analyze</span>
<span class="t" style="left:690.70px;top:436px;font-size:6.0px;line-height:6.0px;color:#3e3e3e;transform:scaleX(0.9740);">High Res: 13 bits</span>
<span class="t" style="left:690.70px;top:444px;font-size:6.0px;line-height:6.0px;color:#3e3e3e;transform:scaleX(1.0297);">2.218 kAcqs</span>
<div class="r" style="left:758.7px;top:416px;width:37.5px;height:14.6px;background:#20cc26;border-radius:2px;"></div>
<div class="r" style="left:798.8px;top:416px;width:1.2px;height:34px;background:#8c8c8c;"></div>
<span class="t" style="left:764.50px;top:422px;font-size:6.2px;line-height:6.2px;color:#e8ffe8;font-weight:bold;transform:scaleX(0.9204);">Triggered</span>
<div class="r" style="left:758.7px;top:433.8px;width:37.5px;height:15.3px;background:#cecece;border-radius:2px;"></div>
<span class="t" style="left:761.25px;top:437px;font-size:6.4px;line-height:6.4px;color:#484848;transform:scaleX(0.9226);">22 Jun 2020</span>
<span class="t" style="left:762.50px;top:443px;font-size:6.4px;line-height:6.4px;color:#484848;transform:scaleX(0.9166);">6:43:41 PM</span>
</div></body></html>
